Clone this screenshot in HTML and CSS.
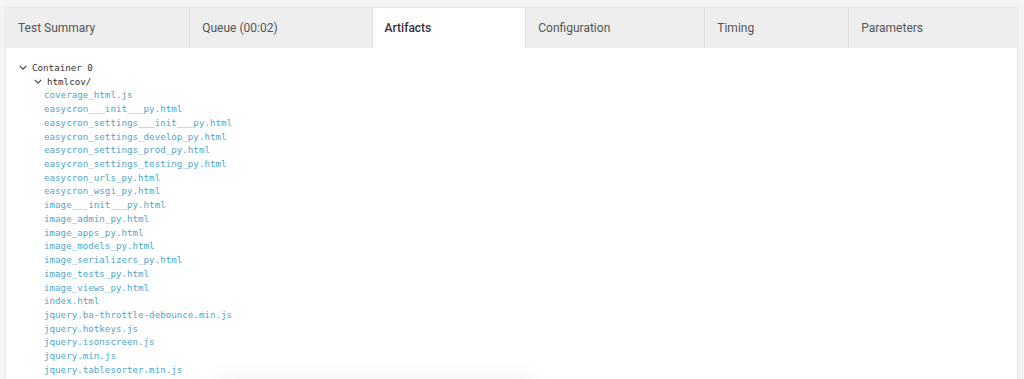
FILE: index.html
```html
<!DOCTYPE html>
<html lang="en">
<head>
    <meta charset="UTF-8">
    <meta name="viewport" content="width=device-width, initial-scale=1.0">
    <title>Build Artifacts</title>
    <link rel="stylesheet" href="styles.css">
</head>
<body>
    <div class="panel">
        <nav class="tabs">
            <div class="tab">Test Summary</div>
            <div class="tab">Queue (00:02)</div>
            <div class="tab active">Artifacts</div>
            <div class="tab">Configuration</div>
            <div class="tab">Timing</div>
            <div class="tab">Parameters</div>
        </nav>
        <div class="tree">
            <div class="node level-1">
                <svg class="chevron" viewBox="0 0 10 6"><path d="M1 1l4 4 4-4" /></svg>
                <span>Container 0</span>
            </div>
            <div class="node level-2">
                <svg class="chevron" viewBox="0 0 10 6"><path d="M1 1l4 4 4-4" /></svg>
                <span>htmlcov/</span>
            </div>
            <a class="file" href="#">coverage_html.js</a>
            <a class="file" href="#">easycron___init___py.html</a>
            <a class="file" href="#">easycron_settings___init___py.html</a>
            <a class="file" href="#">easycron_settings_develop_py.html</a>
            <a class="file" href="#">easycron_settings_prod_py.html</a>
            <a class="file" href="#">easycron_settings_testing_py.html</a>
            <a class="file" href="#">easycron_urls_py.html</a>
            <a class="file" href="#">easycron_wsgi_py.html</a>
            <a class="file" href="#">image___init___py.html</a>
            <a class="file" href="#">image_admin_py.html</a>
            <a class="file" href="#">image_apps_py.html</a>
            <a class="file" href="#">image_models_py.html</a>
            <a class="file" href="#">image_serializers_py.html</a>
            <a class="file" href="#">image_tests_py.html</a>
            <a class="file" href="#">image_views_py.html</a>
            <a class="file" href="#">index.html</a>
            <a class="file" href="#">jquery.ba-throttle-debounce.min.js</a>
            <a class="file" href="#">jquery.hotkeys.js</a>
            <a class="file" href="#">jquery.isonscreen.js</a>
            <a class="file" href="#">jquery.min.js</a>
            <a class="file" href="#">jquery.tablesorter.min.js</a>
        </div>
    </div>
    <div class="toast"></div>
</body>
</html>
```

FILE: styles.css
```css
body, html {
    margin: 0;
    height: 100%;
    overflow: hidden;
    background: #f4f4f4;
    font-family: Roboto, 'Liberation Sans', sans-serif;
}
.panel {
    margin: 8px 7px 0 6px;
    background: #ffffff;
    box-shadow: 0 0 3px rgba(0, 0, 0, 0.12);
    min-height: 400px;
}
.tabs {
    display: flex;
    height: 40px;
    background: #eeeeee;
}
.tab {
    flex: 1 1 auto;
    display: flex;
    align-items: center;
    padding: 0 12px;
    font-size: 12px;
    color: #555555;
    border-left: 1px solid #dddddd;
}
.tab:first-child {
    border-left: none;
}
.tab.active {
    background: #ffffff;
    color: #333333;
    font-weight: 500;
}
.tree {
    padding-top: 13px;
    font-family: 'DejaVu Sans Mono', monospace;
    font-size: 9.2px;
    line-height: 13.72px;
}
.node {
    display: flex;
    align-items: center;
    color: #333333;
}
.level-1 {
    padding-left: 13px;
}
.level-2 {
    padding-left: 28px;
}
.chevron {
    width: 8px;
    height: 5px;
    margin-right: 5px;
    fill: none;
    stroke: #444444;
    stroke-width: 1.4;
}
.file {
    display: block;
    padding-left: 38px;
    color: #4fa6c9;
    text-decoration: none;
}
.toast {
    position: fixed;
    left: 215px;
    bottom: -40px;
    width: 320px;
    height: 40px;
    border-radius: 4px;
    box-shadow: 0 0 24px rgba(0, 0, 0, 0.06);
}
```
